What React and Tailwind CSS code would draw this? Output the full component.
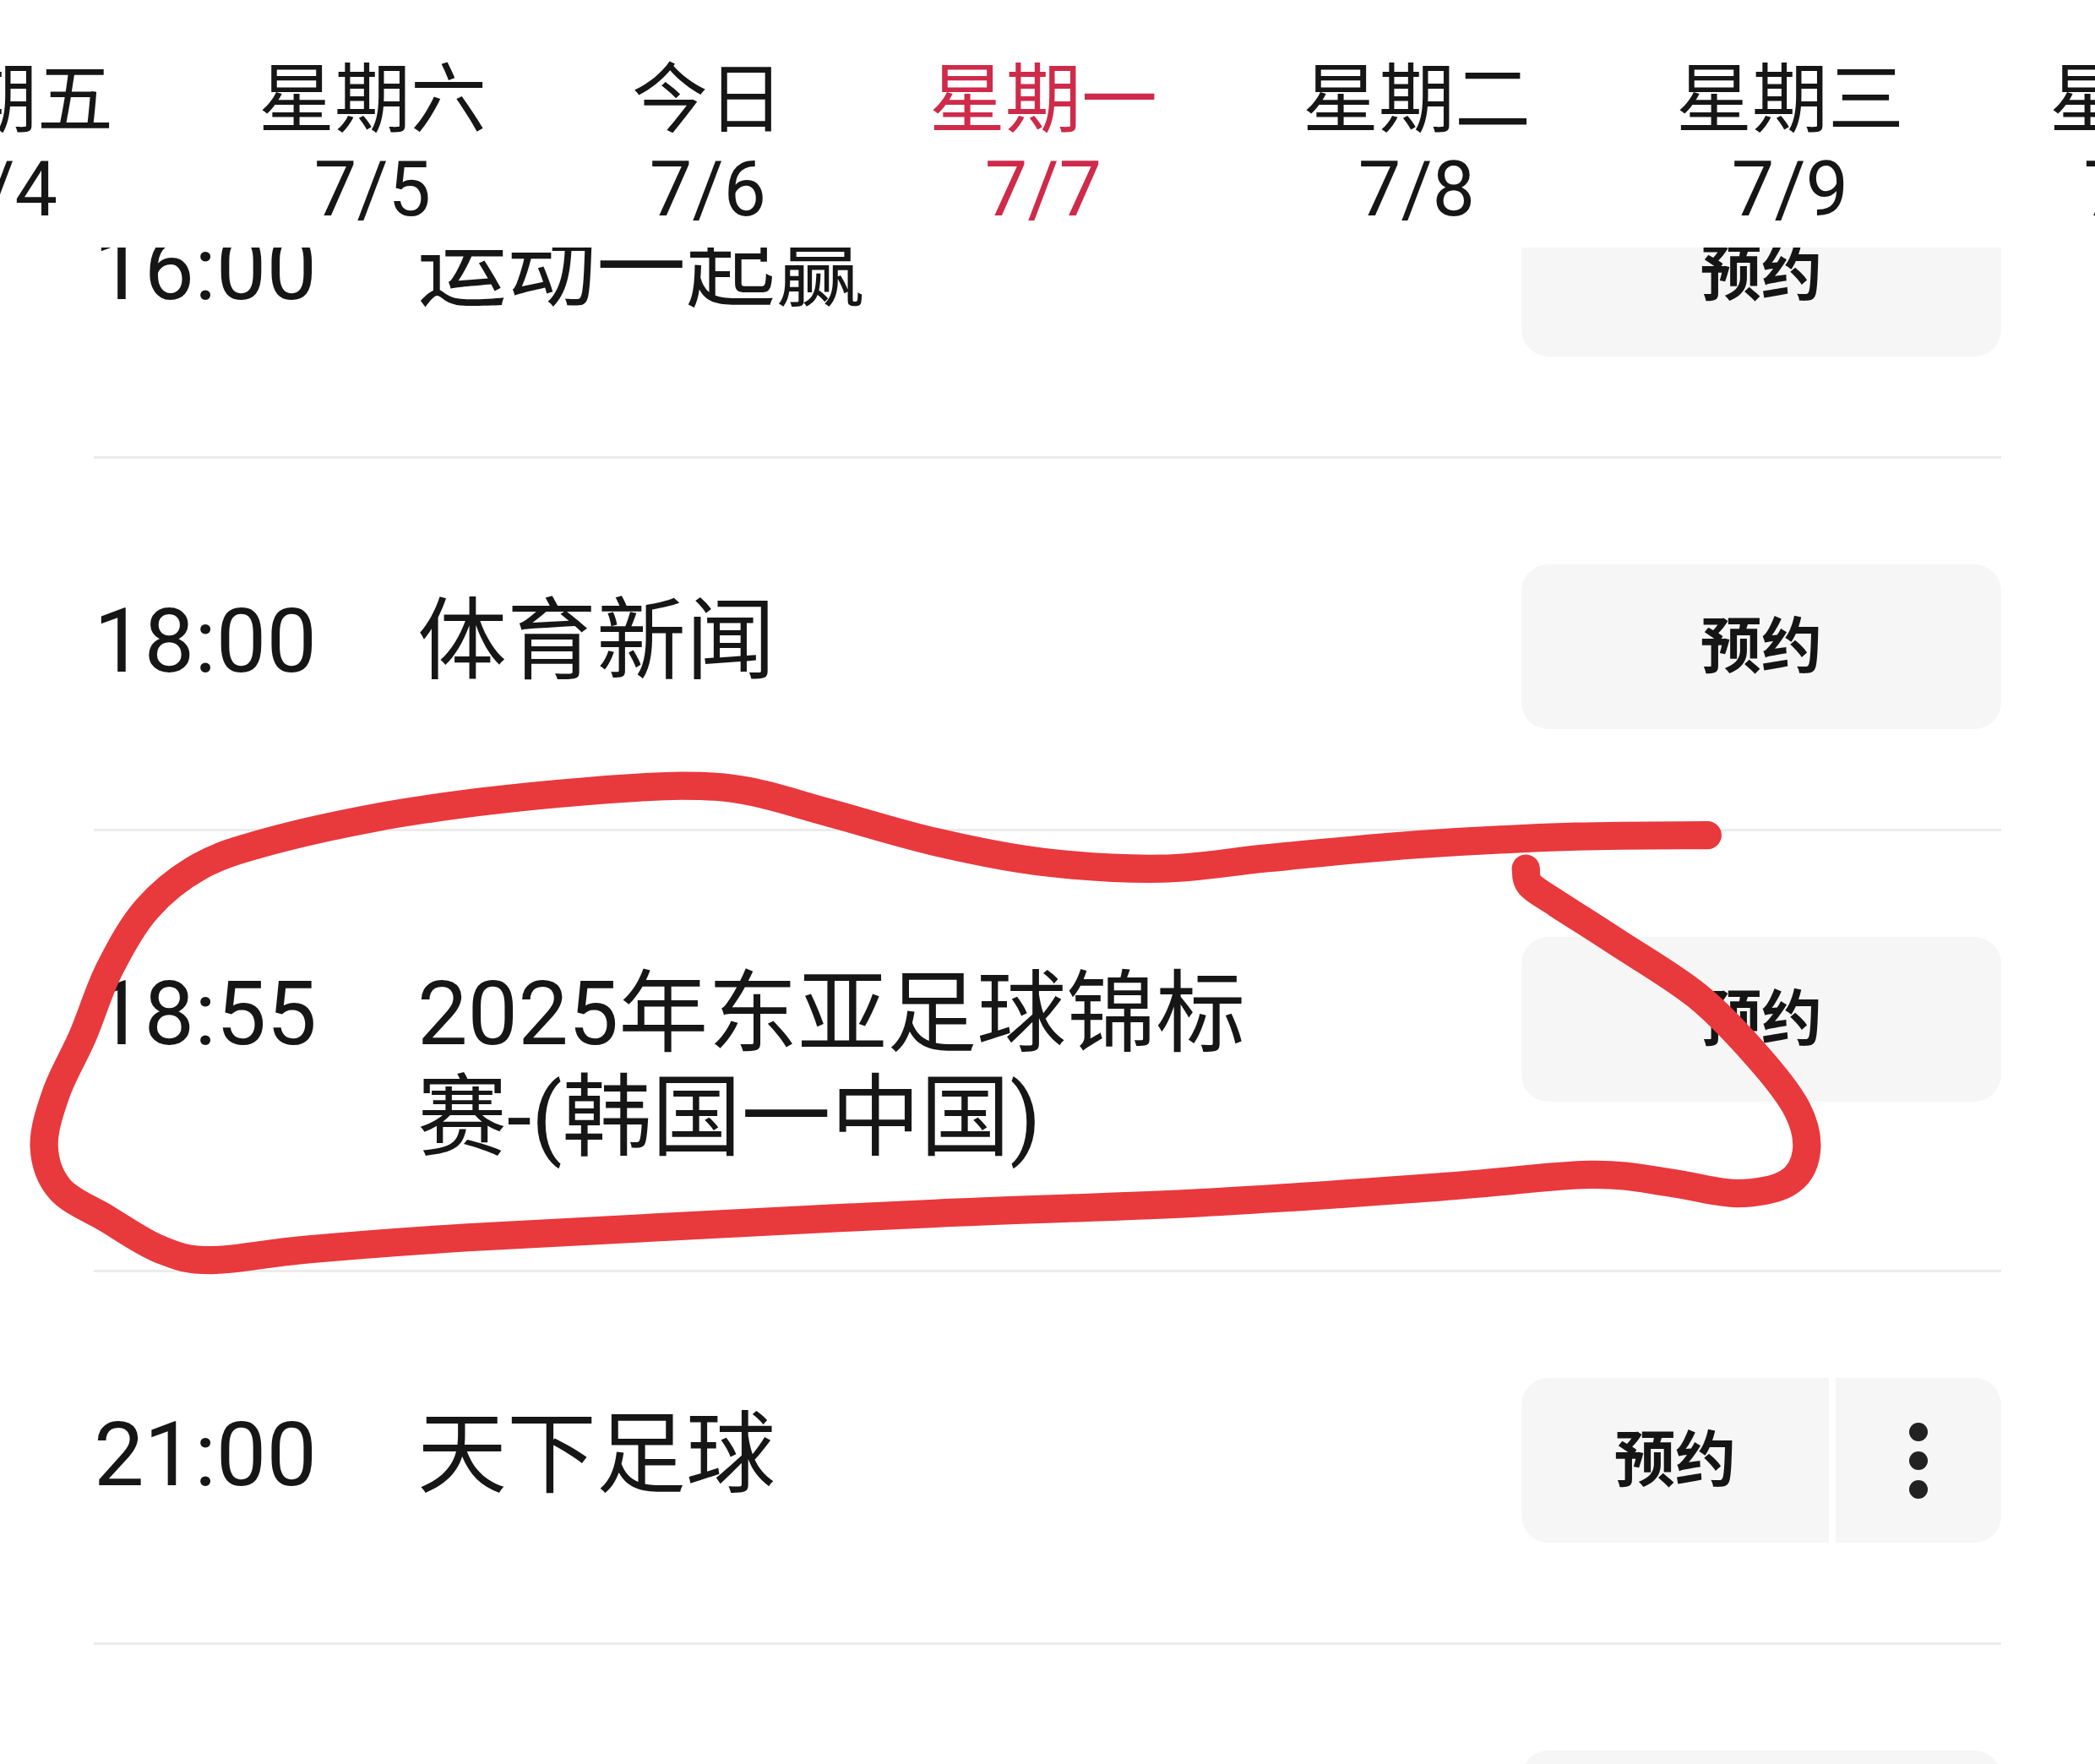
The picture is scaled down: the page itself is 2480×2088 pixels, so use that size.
import React from 'react'

const days = [
  {label: '星期五', date: '7/4'},
  {label: '星期六', date: '7/5'},
  {label: '今日', date: '7/6'},
  {label: '星期一', date: '7/7', active: true},
  {label: '星期二', date: '7/8'},
  {label: '星期三', date: '7/9'},
  {label: '星期四', date: '7/10'},
]

const programs = [
  {time: '16:00', title: '运动一起赢'},
  {time: '18:00', title: '体育新闻'},
  {time: '18:55', title: '2025年东亚足球锦标赛-(韩国一中国)'},
  {time: '21:00', title: '天下足球', more: true},
  {time: '22:30', title: ''},
]

// hand drawn marker loop, points in a 1568x1320 space
const loop = [
  [1278,625],[1180,626],[1060,632],[950,642],[870,650],[780,645],[700,630],[620,608],
  [560,592],[510,588],[440,592],[360,600],[280,612],[200,630],[150,648],[110,680],
  [82,725],[62,775],[42,818],[33,858],[45,890],[80,912],[120,935],[158,943],[230,935],
  [350,926],[500,918],[700,908],[900,900],[1080,888],[1190,879],[1250,885],[1300,893],
  [1338,885],[1352,862],[1345,830],[1315,790],[1270,745],[1210,705],[1165,676],
  [1145,662],[1142,650],
]

const smoothPath = (pts) => {
  let d = `M${pts[0][0]} ${pts[0][1]}`
  for (let i = 0; i < pts.length - 1; i++) {
    const p0 = pts[i - 1] || pts[i]
    const p1 = pts[i]
    const p2 = pts[i + 1]
    const p3 = pts[i + 2] || p2
    const c1 = [p1[0] + (p2[0] - p0[0]) / 6, p1[1] + (p2[1] - p0[1]) / 6]
    const c2 = [p2[0] - (p3[0] - p1[0]) / 6, p2[1] - (p3[1] - p1[1]) / 6]
    d += ` C${c1[0]} ${c1[1]} ${c2[0]} ${c2[1]} ${p2[0]} ${p2[1]}`
  }
  return d
}

const Reserve = ({more}) => {
  if (more) {
    return (
      <div className="flex shrink-0 ml-auto gap-[8px]">
        <div className="w-[364px] h-[195px] rounded-l-[32px] bg-[#f6f6f6] flex items-center justify-center text-[72px] font-bold text-[#151515]">预约</div>
        <div className="w-[196px] h-[195px] rounded-r-[32px] bg-[#f6f6f6] flex flex-col items-center justify-center gap-[12px]">
          <span className="w-[22px] h-[22px] rounded-full bg-[#222]"></span>
          <span className="w-[22px] h-[22px] rounded-full bg-[#222]"></span>
          <span className="w-[22px] h-[22px] rounded-full bg-[#222]"></span>
        </div>
      </div>
    )
  }
  return (
    <div className="shrink-0 ml-auto w-[568px] h-[195px] rounded-[32px] bg-[#f6f6f6] flex items-center justify-center text-[72px] font-bold text-[#151515]">预约</div>
  )
}

export default function App() {
  return (
    <div className="relative w-[2480px] h-[2088px] overflow-hidden bg-white text-[#161616]" style={{fontFamily: "Roboto, 'Noto Sans CJK SC', sans-serif"}}>
      {/* program list, scrolled under the day header */}
      <div className="pt-[102px]">
        {programs.map((p) => (
          <div key={p.time} className="mx-[111px] flex items-start pt-[125px] pb-[118px] border-b-[3px] border-[#ececec]">
            <div className="w-[383px] shrink-0 mt-[30px] text-[106px] leading-[123px]">{p.time}</div>
            <div className="w-[1030px] mt-[30px] text-[106px] leading-[123px]">{p.title}</div>
            <Reserve more={p.more} />
          </div>
        ))}
      </div>

      {/* day tabs */}
      <div className="absolute top-0 left-0 right-0 h-[293px] bg-white z-10 overflow-hidden">
        <div className="flex gap-[172px] ml-[-136px] pt-[66px] whitespace-nowrap">
          {days.map((d) => (
            <div key={d.label} className={`flex flex-col items-center shrink-0 ${d.active ? 'text-[#cf2a4a]' : 'text-[#161616]'}`}>
              <span className="text-[90px] leading-[106px]">{d.label}</span>
              <span className="text-[90px] leading-[106px]">{d.date}</span>
            </div>
          ))}
        </div>
      </div>

      <svg className="absolute inset-0 z-20 pointer-events-none" width="2480" height="2088" viewBox="0 0 1568 1320" preserveAspectRatio="none">
        <path d={smoothPath(loop)} fill="none" stroke="#e8393d" strokeWidth="21" strokeLinecap="round" strokeLinejoin="round" />
      </svg>
    </div>
  )
}
